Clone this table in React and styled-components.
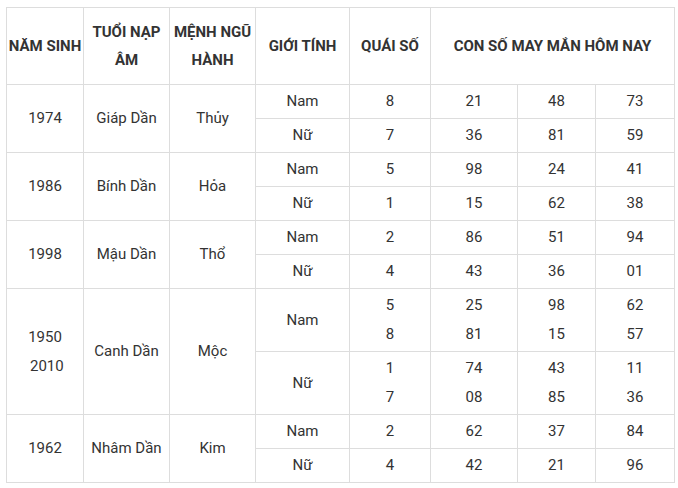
import React from "react";
import styled, { createGlobalStyle } from "styled-components";

const Global = createGlobalStyle`
  html, body { margin: 0; padding: 0; background: #fff; }
  body { font-family: Roboto, "Noto Sans", "Liberation Sans", sans-serif; color: #333; }
`;

const Wrap = styled.div`
  padding: 7px 0 0 6px;
`;

const Table = styled.table`
  border-collapse: collapse;
  table-layout: fixed;
  width: 669px;
  font-size: 15px;
  color: #333;
`;

const Th = styled.th`
  border: 1px solid #ddd;
  padding: 10px 1px;
  line-height: 28px;
  font-weight: 700;
  font-size: 15px;
  text-align: center;
  vertical-align: middle;
  color: #333;
  white-space: nowrap;
`;

const Td = styled.td`
  border: 1px solid #ddd;
  padding: 2px 2px;
  line-height: 29px;
  text-align: center;
  vertical-align: middle;
  white-space: nowrap;
`;

const widths = [77, 86, 86, 94, 81, 87, 78, 79];

const data = [
  {
    year: ["1974"], tuoi: "Giáp Dần", menh: "Thủy",
    rows: [
      { g: "Nam", q: ["8"], n: [["21"], ["48"], ["73"]] },
      { g: "Nữ", q: ["7"], n: [["36"], ["81"], ["59"]] },
    ],
  },
  {
    year: ["1986"], tuoi: "Bính Dần", menh: "Hỏa",
    rows: [
      { g: "Nam", q: ["5"], n: [["98"], ["24"], ["41"]] },
      { g: "Nữ", q: ["1"], n: [["15"], ["62"], ["38"]] },
    ],
  },
  {
    year: ["1998"], tuoi: "Mậu Dần", menh: "Thổ",
    rows: [
      { g: "Nam", q: ["2"], n: [["86"], ["51"], ["94"]] },
      { g: "Nữ", q: ["4"], n: [["43"], ["36"], ["01"]] },
    ],
  },
  {
    year: ["1950", "\u00a02010"], tuoi: "Canh Dần", menh: "Mộc",
    rows: [
      { g: "Nam", q: ["5", "8"], n: [["25", "81"], ["98", "15"], ["62", "57"]] },
      { g: "Nữ", q: ["1", "7"], n: [["74", "08"], ["43", "85"], ["11", "36"]] },
    ],
  },
  {
    year: ["1962"], tuoi: "Nhâm Dần", menh: "Kim",
    rows: [
      { g: "Nam", q: ["2"], n: [["62"], ["37"], ["84"]] },
      { g: "Nữ", q: ["4"], n: [["42"], ["21"], ["96"]] },
    ],
  },
];

const Lines = ({ items }) =>
  items.map((t, i) => (
    <React.Fragment key={i}>
      {i > 0 && <br />}
      {t}
    </React.Fragment>
  ));

export default function App() {
  return (
    <>
      <Global />
      <Wrap>
        <Table>
          <colgroup>
            {widths.map((w, i) => (
              <col key={i} style={{ width: w }} />
            ))}
          </colgroup>
          <thead>
            <tr>
              <Th>NĂM SINH</Th>
              <Th>TUỔI NẠP<br />ÂM</Th>
              <Th>MỆNH NGŨ<br />HÀNH</Th>
              <Th>GIỚI TÍNH</Th>
              <Th>QUÁI SỐ</Th>
              <Th colSpan={3}>CON SỐ MAY MẮN HÔM NAY</Th>
            </tr>
          </thead>
          <tbody>
            {data.map((grp, gi) =>
              grp.rows.map((r, ri) => (
                <tr key={`${gi}-${ri}`}>
                  {ri === 0 && (
                    <>
                      <Td rowSpan={2}><Lines items={grp.year} /></Td>
                      <Td rowSpan={2}>{grp.tuoi}</Td>
                      <Td rowSpan={2}>{grp.menh}</Td>
                    </>
                  )}
                  <Td>{r.g}</Td>
                  <Td><Lines items={r.q} /></Td>
                  {r.n.map((c, ci) => (
                    <Td key={ci}><Lines items={c} /></Td>
                  ))}
                </tr>
              ))
            )}
          </tbody>
        </Table>
      </Wrap>
    </>
  );
}
